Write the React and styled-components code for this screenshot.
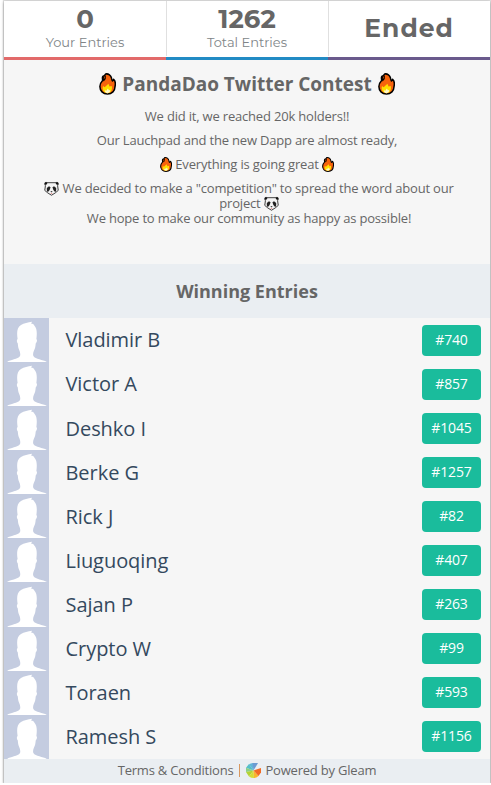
import React from 'react';
import styled, { createGlobalStyle } from 'styled-components';

const WINNERS = [
  { name: 'Vladimir B', entry: 740 },
  { name: 'Victor A', entry: 857 },
  { name: 'Deshko I', entry: 1045 },
  { name: 'Berke G', entry: 1257 },
  { name: 'Rick J', entry: 82 },
  { name: 'Liuguoqing', entry: 407 },
  { name: 'Sajan P', entry: 263 },
  { name: 'Crypto W', entry: 99 },
  { name: 'Toraen', entry: 593 },
  { name: 'Ramesh S', entry: 1156 },
];

const GlobalStyle = createGlobalStyle`
  * {
    box-sizing: border-box;
  }

  body {
    margin: 0;
    background: #fff;
    font-family: 'Open Sans', sans-serif;
    color: #666;
  }

  h1, h2, p {
    margin: 0;
  }
`;

const Widget = styled.main`
  width: 486px;
  height: 782px;
  margin: 1px 0 0 4px;
  display: flex;
  flex-direction: column;
  background: #f6f6f6;
  box-shadow: 0 0 1px 1px rgba(0, 0, 0, 0.12), 0 1px 3px rgba(0, 0, 0, 0.35);
`;

const Stats = styled.header`
  display: grid;
  grid-template-columns: repeat(3, 1fr);
  height: 59px;
  flex: none;
  background: #fff;
  font-family: Montserrat, Inter, sans-serif;
`;

const Stat = styled.div`
  display: flex;
  flex-direction: column;
  align-items: center;
  justify-content: ${({ $single }) => ($single ? 'center' : 'flex-start')};
  padding-top: ${({ $single }) => ($single ? '0' : '4px')};
  padding-bottom: ${({ $single }) => ($single ? '2px' : '0')};
  border-bottom: 3px solid ${({ $color }) => $color};

  & + & {
    background: linear-gradient(#e0e0e0, #e0e0e0) no-repeat left top / 1px 55px;
  }
`;

const StatValue = styled.strong`
  font-size: ${({ $size }) => $size || 26}px;
  line-height: 29px;
  font-weight: 700;
  letter-spacing: ${({ $spacing }) => $spacing || '0'};
`;

const StatLabel = styled.span`
  font-size: 13px;
  line-height: 17px;
  color: #808588;
`;

const Description = styled.section`
  height: 204px;
  flex: none;
  padding: 10px 36px 0;
  text-align: center;
  font-size: 13px;
  line-height: 15px;
  letter-spacing: -0.19px;
`;

const Title = styled.h1`
  display: flex;
  align-items: center;
  justify-content: center;
  gap: 6px;
  margin-bottom: 11px;
  font-size: 19px;
  line-height: 28px;
  font-weight: 700;
  letter-spacing: 0;
`;

const Paragraph = styled.p`
  margin-bottom: 9px;
  padding-left: ${({ $indent }) => $indent || 0}px;
`;

const Emoji = styled.svg`
  width: ${({ $width }) => $width}px;
  height: ${({ $height }) => $height}px;
  margin: -3px 0;
  flex: none;
  vertical-align: 0;
`;

const SectionTitle = styled.h2`
  display: flex;
  align-items: center;
  justify-content: center;
  height: 54px;
  flex: none;
  background: #eaeef2;
  font-size: 18px;
  font-weight: 700;
`;

const WinnerList = styled.ul`
  flex: 1;
  min-height: 0;
  display: grid;
  grid-template-rows: repeat(10, 1fr);
  margin: 0;
  padding: 0;
  list-style: none;
`;

const Winner = styled.li`
  display: flex;
  align-items: center;
  min-height: 0;
  padding-right: 9px;
`;

const Avatar = styled.svg`
  width: 45px;
  height: 100%;
  flex: none;
  background: #c4cce0;
`;

const Name = styled.span`
  flex: 1;
  padding: 0.7px 0 0 16.5px;
  font-size: 20px;
  line-height: 28px;
  letter-spacing: -0.05px;
  color: #34495e;
`;

const Badge = styled.span`
  width: 59px;
  height: 31px;
  border-radius: 4px;
  background: #1abc9c;
  color: #fff;
  font-size: 14px;
  line-height: 29px;
  font-weight: 500;
  letter-spacing: -0.15px;
  text-align: center;
`;

const Footer = styled.footer`
  display: flex;
  align-items: center;
  justify-content: center;
  height: 24px;
  flex: none;
  padding-bottom: 2px;
  background: #eaeef2;
  font-size: 13px;
  letter-spacing: -0.2px;
`;

const Separator = styled.i`
  width: 1px;
  height: 13px;
  margin: 0 6px;
  background: #d9985f;
`;

const Logo = styled.svg`
  width: 15px;
  height: 15px;
  margin-right: 4px;
`;

function Fire({ width = 12, height = 15 }) {
  return (
    <Emoji $width={width} $height={height} viewBox="2.500 0.500 19 23.500" preserveAspectRatio="none">
      <path
        d="M10 1.500C13 1 16 3 16.500 6c.3 1.500.5 2.500 1 3 .9-.3 1.200-1 1.300-1.800C21 9 21 12 20.500 14.500 20.300 19.500 17 23 12 23c-5.200 0-8.500-3.500-8.500-8 0-3 1.500-5 3-6.500L6.500 7c-.5-2 .3-3.500 2-3.500L10 1.500z"
        fill="#f7630c"
        stroke="#000"
        strokeWidth="1.700"
        strokeLinejoin="round"
      />
      <path d="M7.500 4.500c-.6 1.500-.2 3 .3 4C9.500 7 10 5.500 9.500 3.500" fill="none" stroke="#000" strokeWidth="1.300" />
      <path d="M7 14.500l1.800 1.200L13 12l1.300 3 2.400-.7c1 4-.8 7.700-4.700 7.700-4 0-6.500-3-5-7.500z" fill="#ffde00" />
      <path d="M9 19l1.700.4L12.500 17l1 2 1.500-.3c0 2-1 3.300-3 3.300-1.700 0-3-1-3-3z" fill="#fff8c9" />
    </Emoji>
  );
}

function Panda() {
  return (
    <Emoji $width={15} $height={15} viewBox="0 0 16 16">
      <path d="M.8 3.500C.3 1.700 1.600.9 3.500 1.800h9c1.900-.9 3.200-.1 2.700 1.700L14.500 5l.7 5-3.200 2.700L8 15.200l-4-2.500L.8 10l.7-5z" fill="#f4f4f4" stroke="#333" strokeWidth="1" strokeLinejoin="round" />
      <path d="M1 4V1.700h3L2.500 4zM15 4V1.700h-3L13.500 4z" fill="#111" />
      <path d="M3 7.500l2.300-2L7 6.700 6 9.500l-2 2.500-1-2zM13 7.500l-2.300-2L9 6.700l1 2.800 2 2.500 1-2z" fill="#222" />
      <path d="M6.800 11h2.400L8 12.300z" fill="#111" />
      <path d="M7.200 13.300h1.600" stroke="#e87979" strokeWidth=".8" />
    </Emoji>
  );
}

function WinnerAvatar() {
  return (
    <Avatar viewBox="0 0 45 44" preserveAspectRatio="none">
      <path
        d="M3 44c3-2.500 11-2.500 13-6 .6-2 .2-4-1-6.500-.8-1.700-1-3.500-1.200-6C12.600 24 12.500 22 13.600 21c-.9-6-.8-11.500 3.400-14 3-2.200 7-2.500 11-3.300-.5 1-.8 1.600-.5 2.300 1.300-.6 2 .2 2.800 1.500C33.300 10.500 33 16 32.400 21c1 1 .7 3-.7 4.500-.2 3-.6 5-1.700 7-1 2.500-1.200 4-.6 5.500 2 3.500 9.700 3.500 13.600 6z"
        fill="#fff"
      />
    </Avatar>
  );
}

function GleamLogo() {
  return (
    <Logo viewBox="0 0 15 15">
      <path d="M7.500 7.500L3 1.200Q4.500.2 7 0z" fill="#62b5d8" />
      <path d="M7.500 7.500L6.500 0h5.500z" fill="#6c9bd2" />
      <path d="M7.500 7.500L0 4.800 3 1z" fill="#55bfc9" />
      <path d="M7.500 7.500L0 9V4.800z" fill="#8ccf87" />
      <path d="M7.500 7.500L3 13.500 0 9z" fill="#b4d334" />
      <path d="M7.500 7.500L8 15q-3 0-5-1.500z" fill="#d5dc35" />
      <path d="M7.500 7.500l5 5.500q-2 2-4.500 2z" fill="#fab52c" />
      <path d="M7.500 7.500L15 5v4.500L12.500 13z" fill="#f26a24" />
    </Logo>
  );
}

function App() {
  return (
    <>
      <GlobalStyle />
      <Widget>
        <Stats>
          <Stat $color="#e26a6a">
            <StatValue>0</StatValue>
            <StatLabel>Your Entries</StatLabel>
          </Stat>
          <Stat $color="#228bc4">
            <StatValue>1262</StatValue>
            <StatLabel>Total Entries</StatLabel>
          </Stat>
          <Stat $color="#6a5a8c" $single>
            <StatValue $size={25} $spacing="1px">Ended</StatValue>
          </Stat>
        </Stats>

        <Description>
          <Title>
            <Fire width={17} height={22} />
            PandaDao Twitter Contest
            <Fire width={17} height={22} />
          </Title>
          <Paragraph>We did it, we reached 20k holders!!</Paragraph>
          <Paragraph>Our Lauchpad and the new Dapp are almost ready,</Paragraph>
          <Paragraph>
            <Fire /> Everything is going great <Fire />
          </Paragraph>
          <Paragraph $indent={4}>
            <Panda /> We decided to make a "competition" to spread the word about our project <Panda />
            <br />
            We hope to make our community as happy as possible!
          </Paragraph>
        </Description>

        <SectionTitle>Winning Entries</SectionTitle>
        <WinnerList>
          {WINNERS.map(({ name, entry }) => (
            <Winner key={entry}>
              <WinnerAvatar />
              <Name>{name}</Name>
              <Badge>#{entry}</Badge>
            </Winner>
          ))}
        </WinnerList>

        <Footer>
          <span>Terms &amp; Conditions</span>
          <Separator />
          <GleamLogo />
          <span>Powered by Gleam</span>
        </Footer>
      </Widget>
    </>
  );
}

export default App;
